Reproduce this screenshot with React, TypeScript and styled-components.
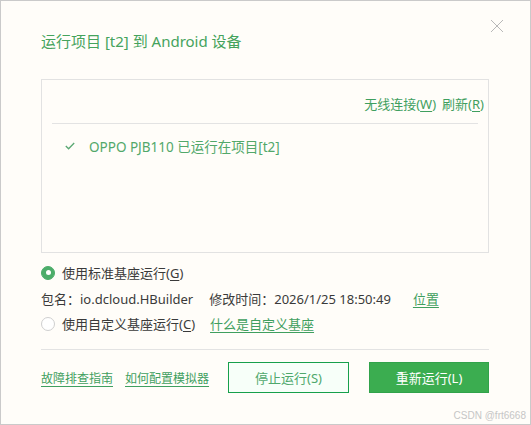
import React from "react";
import styled, { createGlobalStyle } from "styled-components";

const GlobalStyle = createGlobalStyle`
  html, body {
    margin: 0;
    padding: 0;
    background: #fffdf9;
  }
  * {
    box-sizing: border-box;
  }
`;

const green = "#3f9f5f";

const Window = styled.div`
  position: relative;
  width: 531px;
  height: 425px;
  background: #fffdf9;
  border: 1px solid #cacaca;
  font-family: "Noto Sans", "Noto Sans CJK SC", sans-serif;
  font-size: 13px;
  color: #3a3a3a;
  padding: 0 41px 0 40px;
  display: flex;
  flex-direction: column;
  white-space: nowrap;
`;

const CloseButton = styled.div`
  position: absolute;
  top: 18px;
  right: 26px;
  width: 14px;
  height: 14px;
  display: flex;
`;

const Title = styled.div`
  margin-top: 29px;
  height: 22px;
  line-height: 22px;
  font-size: 15px;
  color: #45a35c;
`;

const DeviceBox = styled.div`
  margin-top: 27px;
  height: 174px;
  border: 1px solid #e2e2e2;
  padding: 0 10px;
  display: flex;
  flex-direction: column;
`;

const LinkBar = styled.div`
  height: 43px;
  display: flex;
  justify-content: flex-end;
  align-items: center;
  gap: 6px;
  padding-top: 3px;
  margin-right: -6px;
  color: ${green};
`;

const Divider = styled.div`
  height: 1px;
  background: #e3e3e3;
`;

const Key = styled.span`
  text-decoration: underline;
  text-underline-offset: 2px;
`;

const DeviceRow = styled.div`
  height: 44px;
  display: flex;
  align-items: center;
  padding-left: 13px;
  gap: 14px;
  font-size: 13.5px;
  color: #52a86a;
`;

const Option = styled.div`
  height: 25px;
  display: flex;
  align-items: center;
  gap: 7px;
`;

const Radio = styled.span<{ $checked?: boolean }>`
  width: 14px;
  height: 14px;
  border-radius: 50%;
  flex-shrink: 0;
  display: flex;
  align-items: center;
  justify-content: center;
  background: ${({ $checked }) => ($checked ? "#4cad6a" : "#fff")};
  border: 1px solid ${({ $checked }) => ($checked ? "#4cad6a" : "#cfcfcf")};
  &::after {
    content: "";
    width: 5px;
    height: 5px;
    border-radius: 50%;
    background: #fff;
    display: ${({ $checked }) => ($checked ? "block" : "none")};
  }
`;

const Options = styled.div`
  margin-top: 7px;
  display: flex;
  flex-direction: column;
`;

const InfoRow = styled.div`
  height: 26px;
  display: flex;
  align-items: center;
  gap: 16px;
`;

const TextLink = styled.span<{ $gap?: number; $small?: boolean }>`
  color: ${green};
  font-size: ${({ $small }) => ($small ? 12 : 13)}px;
  text-decoration: underline;
  text-underline-offset: 3px;
  margin-left: ${({ $gap }) => $gap ?? 0}px;
`;

const Footer = styled.div`
  margin-top: 13px;
  border-top: 1px solid #e3e3e3;
  padding-top: 12px;
  display: flex;
  align-items: center;
  gap: 12px;
`;

const Buttons = styled.div`
  margin-left: auto;
  display: flex;
  gap: 20px;
`;

const Button = styled.button<{ $primary?: boolean }>`
  height: 31px;
  width: ${({ $primary }) => ($primary ? 120 : 121)}px;
  flex-shrink: 0;
  font: inherit;
  font-size: 13px;
  cursor: pointer;
  border: 1px solid ${({ $primary }) => ($primary ? "#31a34b" : "#17a04c")};
  background: ${({ $primary }) => ($primary ? "#3bad50" : "#f7fff9")};
  color: ${({ $primary }) => ($primary ? "#ffffff" : "#4fa86c")};
`;

const Watermark = styled.div`
  position: absolute;
  right: 4px;
  bottom: 3px;
  font-size: 10px;
  color: #c6c6c6;
  font-family: "Liberation Sans", sans-serif;
`;

export default function App() {
  return (
    <>
      <GlobalStyle />
      <Window>
        <CloseButton>
          <svg width="14" height="14" viewBox="0 0 14 14">
            <path d="M1 1 L13 13 M13 1 L1 13" stroke="#b8b8b8" strokeWidth="1" fill="none" />
          </svg>
        </CloseButton>
        <Title>运行项目 [t2] 到 Android 设备</Title>

        <DeviceBox>
          <LinkBar>
            <span>
              无线连接(<Key>W</Key>)
            </span>
            <span>
              刷新(<Key>R</Key>)
            </span>
          </LinkBar>
          <Divider />
          <DeviceRow>
            <svg width="10" height="8" viewBox="0 0 10 8">
              <path d="M0.8 4 L3.6 6.8 L9.2 1" stroke="#5aa873" strokeWidth="1.3" fill="none" />
            </svg>
            <span>OPPO PJB110 已运行在项目[t2]</span>
          </DeviceRow>
        </DeviceBox>

        <Options>
          <Option>
            <Radio $checked />
            <span>
              使用标准基座运行(<Key>G</Key>)
            </span>
          </Option>
          <InfoRow>
            <span>包名：io.dcloud.HBuilder</span>
            <span>修改时间：2026/1/25 18:50:49</span>
            <TextLink $gap={6}>位置</TextLink>
          </InfoRow>
          <Option>
            <Radio />
            <span>
              使用自定义基座运行(<Key>C</Key>)
            </span>
            <TextLink $gap={8}>什么是自定义基座</TextLink>
          </Option>
        </Options>

        <Footer>
          <TextLink $small>故障排查指南</TextLink>
          <TextLink $small>如何配置模拟器</TextLink>
          <Buttons>
            <Button>停止运行(S)</Button>
            <Button $primary>重新运行(L)</Button>
          </Buttons>
        </Footer>

        <Watermark>CSDN @frt6668</Watermark>
      </Window>
    </>
  );
}
